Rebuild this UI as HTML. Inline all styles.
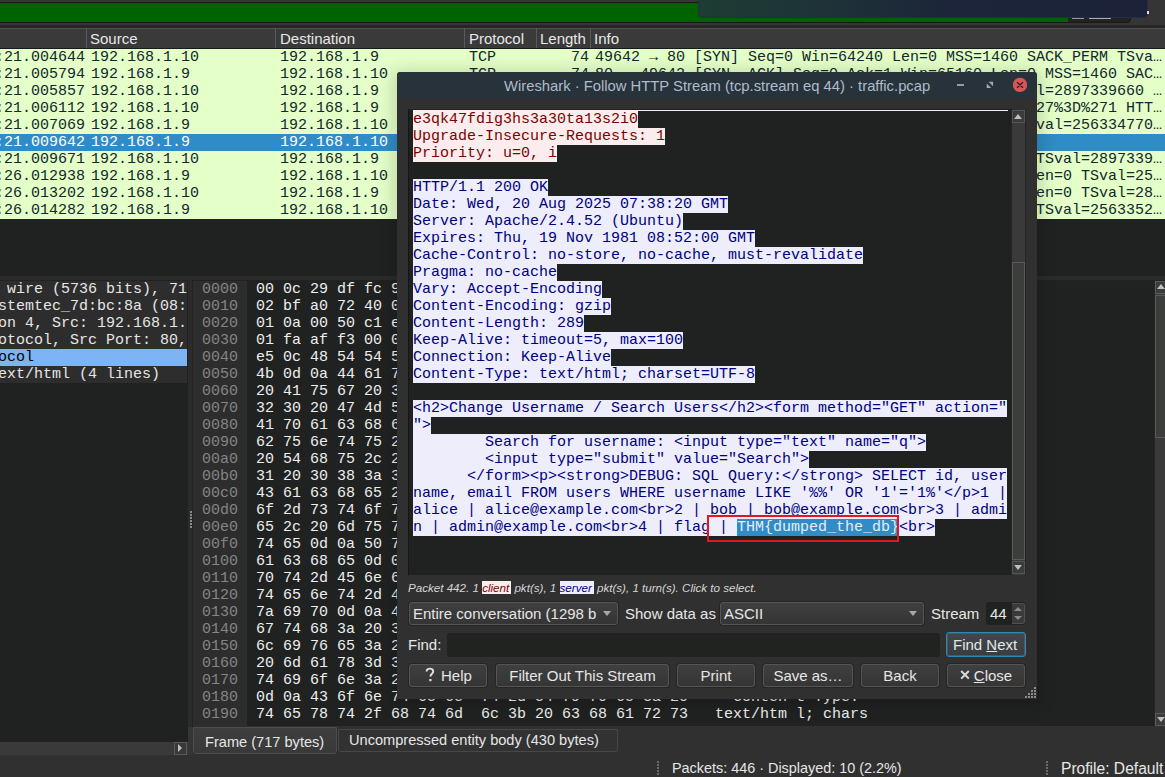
<!DOCTYPE html>
<html><head><meta charset="utf-8"><style>
*{margin:0;padding:0;box-sizing:border-box}
html,body{width:1165px;height:777px;overflow:hidden}
body{position:relative;background:#353535;font-family:"Liberation Sans",sans-serif;color:#e6e6e6}
.a{position:absolute}
.m{font-family:"Liberation Mono",monospace;font-size:15px;line-height:17px;white-space:pre}
.s{font-family:"Liberation Sans",sans-serif;font-size:15px;white-space:pre}
</style></head><body>

<div class="a" style="left:-4px;top:2px;width:1135px;height:21px;background:#212321;border:1px solid #181818;border-radius:0 0 4px 0"></div>
<div class="a" style="left:0;top:3px;width:1068px;height:19px;background:#006300"></div>
<div class="a" style="left:1072px;top:17px;width:12px;height:2px;background:#9a9a9a"></div>
<div class="a" style="left:1089px;top:17px;width:22px;height:2px;background:#b0b0b0"></div>
<div class="a" style="left:0;top:25px;width:1165px;height:3px;background:#262626"></div>
<div class="a" style="left:698px;top:-6px;width:450px;height:24px;border-radius:4px;border:1px solid #252c48;background:linear-gradient(90deg,#1d3d33 0%,#1e3138 30%,#1c2539 55%,#1c2339 100%)"></div>
<div class="a" style="left:1147px;top:11px;width:2px;height:3px;background:#ddd"></div>
<div class="a" style="left:0;top:28px;width:1165px;height:20px;background:#3a3a3a;border-top:1px solid #4f4f4f"></div>
<div class="a" style="left:86px;top:28px;width:1px;height:20px;background:#5a5a5a"></div>
<div class="a" style="left:275px;top:28px;width:1px;height:20px;background:#5a5a5a"></div>
<div class="a" style="left:464px;top:28px;width:1px;height:20px;background:#5a5a5a"></div>
<div class="a" style="left:536px;top:28px;width:1px;height:20px;background:#5a5a5a"></div>
<div class="a" style="left:590px;top:28px;width:1px;height:20px;background:#5a5a5a"></div>
<div class="a s" style="left:90px;top:30px;line-height:17px;color:#e8e8e8">Source</div>
<div class="a s" style="left:280px;top:30px;line-height:17px;color:#e8e8e8">Destination</div>
<div class="a s" style="left:469px;top:30px;line-height:17px;color:#e8e8e8">Protocol</div>
<div class="a s" style="left:540px;top:30px;line-height:17px;color:#e8e8e8">Length</div>
<div class="a s" style="left:594px;top:30px;line-height:17px;color:#e8e8e8">Info</div>
<div class="a" style="left:0;top:48px;width:1165px;height:228px;background:#1f2220;border-top:1px solid #1a1a1a"></div>
<div class="a" style="left:0;top:49px;width:1165px;height:17px;background:#e4ffc7"></div>
<div class="a m" style="left:-50px;top:49px;color:#12272e">07:38:21.004644</div>
<div class="a m" style="left:91px;top:49px;color:#12272e">192.168.1.10</div>
<div class="a m" style="left:280px;top:49px;color:#12272e">192.168.1.9</div>
<div class="a m" style="left:469px;top:49px;color:#12272e">TCP</div>
<div class="a m" style="left:571px;top:49px;color:#12272e">74</div>
<div class="a m" style="left:595px;top:49px;color:#12272e">49642 → 80 [SYN] Seq=0 Win=64240 Len=0 MSS=1460 SACK_PERM TSva…</div>
<div class="a" style="left:0;top:66px;width:1165px;height:17px;background:#e4ffc7"></div>
<div class="a m" style="left:-50px;top:66px;color:#12272e">07:38:21.005794</div>
<div class="a m" style="left:91px;top:66px;color:#12272e">192.168.1.9</div>
<div class="a m" style="left:280px;top:66px;color:#12272e">192.168.1.10</div>
<div class="a m" style="left:469px;top:66px;color:#12272e">TCP</div>
<div class="a m" style="left:571px;top:66px;color:#12272e">74</div>
<div class="a m" style="left:595px;top:66px;color:#12272e">80 → 49642 [SYN, ACK] Seq=0 Ack=1 Win=65160 Len=0 MSS=1460 SAC…</div>
<div class="a" style="left:0;top:83px;width:1165px;height:17px;background:#e4ffc7"></div>
<div class="a m" style="left:-50px;top:83px;color:#12272e">07:38:21.005857</div>
<div class="a m" style="left:91px;top:83px;color:#12272e">192.168.1.10</div>
<div class="a m" style="left:280px;top:83px;color:#12272e">192.168.1.9</div>
<div class="a m" style="left:469px;top:83px;color:#12272e">TCP</div>
<div class="a m" style="left:571px;top:83px;color:#12272e">66</div>
<div class="a m" style="left:595px;top:83px;color:#12272e">49642 → 80 [ACK] Seq=1 Ack=1 Win=64256 Len=0 TSval=2897339660 …</div>
<div class="a" style="left:0;top:100px;width:1165px;height:17px;background:#e4ffc7"></div>
<div class="a m" style="left:-50px;top:100px;color:#12272e">07:38:21.006112</div>
<div class="a m" style="left:91px;top:100px;color:#12272e">192.168.1.10</div>
<div class="a m" style="left:280px;top:100px;color:#12272e">192.168.1.9</div>
<div class="a m" style="left:469px;top:100px;color:#12272e">HTTP</div>
<div class="a m" style="left:562px;top:100px;color:#12272e">540</div>
<div class="a m" style="left:595px;top:100px;color:#12272e">GET /?q=%25%27+OR+%271%27%3D%271 HTTP/1.1  x%27+O27%3D%271 HTT…</div>
<div class="a" style="left:0;top:117px;width:1165px;height:17px;background:#e4ffc7"></div>
<div class="a m" style="left:-50px;top:117px;color:#12272e">07:38:21.007069</div>
<div class="a m" style="left:91px;top:117px;color:#12272e">192.168.1.9</div>
<div class="a m" style="left:280px;top:117px;color:#12272e">192.168.1.10</div>
<div class="a m" style="left:469px;top:117px;color:#12272e">TCP</div>
<div class="a m" style="left:571px;top:117px;color:#12272e">66</div>
<div class="a m" style="left:595px;top:117px;color:#12272e">80 → 49642 [ACK] Seq=1 Ack=475 Win=65024 Len=0 TSval=256334770…</div>
<div class="a" style="left:0;top:134px;width:1165px;height:17px;background:#308cc6"></div>
<div class="a m" style="left:-50px;top:134px;color:#ffffff">07:38:21.009642</div>
<div class="a m" style="left:91px;top:134px;color:#ffffff">192.168.1.9</div>
<div class="a m" style="left:280px;top:134px;color:#ffffff">192.168.1.10</div>
<div class="a m" style="left:469px;top:134px;color:#ffffff">HTTP</div>
<div class="a m" style="left:562px;top:134px;color:#ffffff">717</div>
<div class="a m" style="left:595px;top:134px;color:#ffffff">HTTP/1.1 200 OK  (text/html)</div>
<div class="a" style="left:0;top:151px;width:1165px;height:17px;background:#e4ffc7"></div>
<div class="a m" style="left:-50px;top:151px;color:#12272e">07:38:21.009671</div>
<div class="a m" style="left:91px;top:151px;color:#12272e">192.168.1.10</div>
<div class="a m" style="left:280px;top:151px;color:#12272e">192.168.1.9</div>
<div class="a m" style="left:469px;top:151px;color:#12272e">TCP</div>
<div class="a m" style="left:571px;top:151px;color:#12272e">66</div>
<div class="a m" style="left:595px;top:151px;color:#12272e">49642 → 80 [ACK] Seq=475 Ack=652 Win=64128 Len=0 TSval=2897339…</div>
<div class="a" style="left:0;top:168px;width:1165px;height:17px;background:#e4ffc7"></div>
<div class="a m" style="left:-50px;top:168px;color:#12272e">07:38:26.012938</div>
<div class="a m" style="left:91px;top:168px;color:#12272e">192.168.1.9</div>
<div class="a m" style="left:280px;top:168px;color:#12272e">192.168.1.10</div>
<div class="a m" style="left:469px;top:168px;color:#12272e">TCP</div>
<div class="a m" style="left:571px;top:168px;color:#12272e">66</div>
<div class="a m" style="left:595px;top:168px;color:#12272e">80 → 49642 [FIN, ACK] Seq=652 Ack=475 Win=65024 Len=0 TSval=25…</div>
<div class="a" style="left:0;top:185px;width:1165px;height:17px;background:#e4ffc7"></div>
<div class="a m" style="left:-50px;top:185px;color:#12272e">07:38:26.013202</div>
<div class="a m" style="left:91px;top:185px;color:#12272e">192.168.1.10</div>
<div class="a m" style="left:280px;top:185px;color:#12272e">192.168.1.9</div>
<div class="a m" style="left:469px;top:185px;color:#12272e">TCP</div>
<div class="a m" style="left:571px;top:185px;color:#12272e">66</div>
<div class="a m" style="left:595px;top:185px;color:#12272e">49642 → 80 [FIN, ACK] Seq=475 Ack=653 Win=64128 Len=0 TSval=28…</div>
<div class="a" style="left:0;top:202px;width:1165px;height:17px;background:#e4ffc7"></div>
<div class="a m" style="left:-50px;top:202px;color:#12272e">07:38:26.014282</div>
<div class="a m" style="left:91px;top:202px;color:#12272e">192.168.1.9</div>
<div class="a m" style="left:280px;top:202px;color:#12272e">192.168.1.10</div>
<div class="a m" style="left:469px;top:202px;color:#12272e">TCP</div>
<div class="a m" style="left:571px;top:202px;color:#12272e">66</div>
<div class="a m" style="left:595px;top:202px;color:#12272e">80 → 49642 [ACK] Seq=653 Ack=476 Win=65024 Len=0 TSval=2563352…</div>
<div class="a" style="left:0;top:276px;width:1165px;height:5px;background:#2b2b2b"></div>
<div class="a" style="left:0;top:280px;width:188px;height:475px;background:#1f2220;border-top:1px solid #222"></div>
<div class="a" style="left:0;top:281px;width:187px;height:17px;background:#2d2d2d"></div>
<div class="a m" style="left:-2px;top:281px;color:#e6e6e6"> wire (5736 bits), 71</div>
<div class="a" style="left:0;top:298px;width:187px;height:17px;background:#2d2d2d"></div>
<div class="a m" style="left:-2px;top:298px;color:#e6e6e6">stemtec_7d:bc:8a (08:</div>
<div class="a" style="left:0;top:315px;width:187px;height:17px;background:#2d2d2d"></div>
<div class="a m" style="left:-2px;top:315px;color:#e6e6e6">on 4, Src: 192.168.1.</div>
<div class="a" style="left:0;top:332px;width:187px;height:17px;background:#2d2d2d"></div>
<div class="a m" style="left:-2px;top:332px;color:#e6e6e6">otocol, Src Port: 80,</div>
<div class="a" style="left:0;top:349px;width:187px;height:17px;background:#7eb4f4"></div>
<div class="a m" style="left:-2px;top:349px;color:#000000">ocol</div>
<div class="a" style="left:0;top:366px;width:187px;height:17px;background:#2d2d2d"></div>
<div class="a m" style="left:-2px;top:366px;color:#e6e6e6">ext/html (4 lines)</div>
<div class="a" style="left:0;top:742px;width:188px;height:14px;background:#3a3a3a;border-bottom:1px solid #242424"></div>
<div class="a" style="left:174px;top:742px;width:13px;height:13px;background:#383a38;border:1px solid #5a5a5a"></div>
<div class="a" style="left:178px;top:744px;width:0;height:0;border-left:4px solid #c0c0c0;border-top:4px solid transparent;border-bottom:4px solid transparent"></div>
<div class="a" style="left:188px;top:281px;width:5px;height:446px;background:#2b2b2b"></div>
<div class="a" style="left:190px;top:511px;width:2px;height:2px;background:#8a8a8a"></div>
<div class="a" style="left:190px;top:514px;width:2px;height:2px;background:#8a8a8a"></div>
<div class="a" style="left:190px;top:517px;width:2px;height:2px;background:#8a8a8a"></div>
<div class="a" style="left:190px;top:520px;width:2px;height:2px;background:#8a8a8a"></div>
<div class="a" style="left:190px;top:523px;width:2px;height:2px;background:#8a8a8a"></div>
<div class="a" style="left:190px;top:526px;width:2px;height:2px;background:#8a8a8a"></div>
<div class="a" style="left:192px;top:280px;width:973px;height:447px;background:#1f2220;border-left:1px solid #222;border-top:1px solid #222"></div>
<div class="a" style="left:193px;top:281px;width:54px;height:445px;background:#2d2d2d"></div>
<div class="a m" style="left:202px;top:281px;color:#858585">0000</div>
<div class="a m" style="left:256px;top:281px;color:#eeeeee">00 0c 29 df fc 9a 08 00  27 bc 7d 8a 08 00 45 00   ··)····· &#x27;·}···E·</div>
<div class="a m" style="left:202px;top:298px;color:#858585">0010</div>
<div class="a m" style="left:256px;top:298px;color:#eeeeee">02 bf a0 72 40 00 40 06  15 3a c0 a8 01 09 c0 a8   ···r@·@· ·:······</div>
<div class="a m" style="left:202px;top:315px;color:#858585">0020</div>
<div class="a m" style="left:256px;top:315px;color:#eeeeee">01 0a 00 50 c1 e2 ac 9a  1e 62 b7 1c 4d 71 80 18   ···P···· ·b··Mq··</div>
<div class="a m" style="left:202px;top:332px;color:#858585">0030</div>
<div class="a m" style="left:256px;top:332px;color:#eeeeee">01 fa af f3 00 00 01 01  08 0a 98 c7 dd b2 ac b1   ········ ········</div>
<div class="a m" style="left:202px;top:349px;color:#858585">0040</div>
<div class="a m" style="left:256px;top:349px;color:#eeeeee">e5 0c 48 54 54 50 2f 31  2e 31 20 32 30 30 20 4f   ··HTTP/1 .1 200 O</div>
<div class="a m" style="left:202px;top:366px;color:#858585">0050</div>
<div class="a m" style="left:256px;top:366px;color:#eeeeee">4b 0d 0a 44 61 74 65 3a  20 57 65 64 2c 20 32 30   K··Date:  Wed, 20</div>
<div class="a m" style="left:202px;top:383px;color:#858585">0060</div>
<div class="a m" style="left:256px;top:383px;color:#eeeeee">20 41 75 67 20 32 30 32  35 20 30 37 3a 33 38 3a    Aug 202 5 07:38:</div>
<div class="a m" style="left:202px;top:400px;color:#858585">0070</div>
<div class="a m" style="left:256px;top:400px;color:#eeeeee">32 30 20 47 4d 54 0d 0a  53 65 72 76 65 72 3a 20   20 GMT·· Server: </div>
<div class="a m" style="left:202px;top:417px;color:#858585">0080</div>
<div class="a m" style="left:256px;top:417px;color:#eeeeee">41 70 61 63 68 65 2f 32  2e 34 2e 35 32 20 28 55   Apache/2 .4.52 (U</div>
<div class="a m" style="left:202px;top:434px;color:#858585">0090</div>
<div class="a m" style="left:256px;top:434px;color:#eeeeee">62 75 6e 74 75 29 0d 0a  45 78 70 69 72 65 73 3a   buntu)·· Expires:</div>
<div class="a m" style="left:202px;top:451px;color:#858585">00a0</div>
<div class="a m" style="left:256px;top:451px;color:#eeeeee">20 54 68 75 2c 20 31 39  20 4e 6f 76 20 31 39 38    Thu, 19  Nov 198</div>
<div class="a m" style="left:202px;top:468px;color:#858585">00b0</div>
<div class="a m" style="left:256px;top:468px;color:#eeeeee">31 20 30 38 3a 35 32 3a  30 30 20 47 4d 54 0d 0a   1 08:52: 00 GMT··</div>
<div class="a m" style="left:202px;top:485px;color:#858585">00c0</div>
<div class="a m" style="left:256px;top:485px;color:#eeeeee">43 61 63 68 65 2d 43 6f  6e 74 72 6f 6c 3a 20 6e   Cache-Co ntrol: n</div>
<div class="a m" style="left:202px;top:502px;color:#858585">00d0</div>
<div class="a m" style="left:256px;top:502px;color:#eeeeee">6f 2d 73 74 6f 72 65 2c  20 6e 6f 2d 63 61 63 68   o-store,  no-cach</div>
<div class="a m" style="left:202px;top:519px;color:#858585">00e0</div>
<div class="a m" style="left:256px;top:519px;color:#eeeeee">65 2c 20 6d 75 73 74 2d  72 65 76 61 6c 69 64 61   e, must- revalida</div>
<div class="a m" style="left:202px;top:536px;color:#858585">00f0</div>
<div class="a m" style="left:256px;top:536px;color:#eeeeee">74 65 0d 0a 50 72 61 67  6d 61 3a 20 6e 6f 2d 63   te··Prag ma: no-c</div>
<div class="a m" style="left:202px;top:553px;color:#858585">0100</div>
<div class="a m" style="left:256px;top:553px;color:#eeeeee">61 63 68 65 0d 0a 56 61  72 79 3a 20 41 63 63 65   ache··Va ry: Acce</div>
<div class="a m" style="left:202px;top:570px;color:#858585">0110</div>
<div class="a m" style="left:256px;top:570px;color:#eeeeee">70 74 2d 45 6e 63 6f 64  69 6e 67 0d 0a 43 6f 6e   pt-Encod ing··Con</div>
<div class="a m" style="left:202px;top:587px;color:#858585">0120</div>
<div class="a m" style="left:256px;top:587px;color:#eeeeee">74 65 6e 74 2d 45 6e 63  6f 64 69 6e 67 3a 20 67   tent-Enc oding: g</div>
<div class="a m" style="left:202px;top:604px;color:#858585">0130</div>
<div class="a m" style="left:256px;top:604px;color:#eeeeee">7a 69 70 0d 0a 43 6f 6e  74 65 6e 74 2d 4c 65 6e   zip··Con tent-Len</div>
<div class="a m" style="left:202px;top:621px;color:#858585">0140</div>
<div class="a m" style="left:256px;top:621px;color:#eeeeee">67 74 68 3a 20 32 38 39  0d 0a 4b 65 65 70 2d 41   gth: 289 ··Keep-A</div>
<div class="a m" style="left:202px;top:638px;color:#858585">0150</div>
<div class="a m" style="left:256px;top:638px;color:#eeeeee">6c 69 76 65 3a 20 74 69  6d 65 6f 75 74 3d 35 2c   live: ti meout=5,</div>
<div class="a m" style="left:202px;top:655px;color:#858585">0160</div>
<div class="a m" style="left:256px;top:655px;color:#eeeeee">20 6d 61 78 3d 31 30 30  0d 0a 43 6f 6e 6e 65 63    max=100 ··Connec</div>
<div class="a m" style="left:202px;top:672px;color:#858585">0170</div>
<div class="a m" style="left:256px;top:672px;color:#eeeeee">74 69 6f 6e 3a 20 4b 65  65 70 2d 41 6c 69 76 65   tion: Ke ep-Alive</div>
<div class="a m" style="left:202px;top:689px;color:#858585">0180</div>
<div class="a m" style="left:256px;top:689px;color:#eeeeee">0d 0a 43 6f 6e 74 65 6e  74 2d 54 79 70 65 3a 20   ··Conten t-Type: </div>
<div class="a m" style="left:202px;top:706px;color:#858585">0190</div>
<div class="a m" style="left:256px;top:706px;color:#eeeeee">74 65 78 74 2f 68 74 6d  6c 3b 20 63 68 61 72 73   text/htm l; chars</div>
<div class="a" style="left:1154px;top:281px;width:11px;height:445px;background:#3a3a3a;border-left:1px solid #262626"></div>
<div class="a" style="left:1155px;top:281px;width:12px;height:13px;background:#3a3c3a;border:1px solid #5a5a5a"></div>
<div class="a" style="left:1157px;top:284px;width:0;height:0;border-bottom:5px solid #c0c0c0;border-left:4px solid transparent;border-right:4px solid transparent"></div>
<div class="a" style="left:1155px;top:295px;width:12px;height:143px;background:#3c3e3c;border:1px solid #5a5a5a"></div>
<div class="a" style="left:1155px;top:713px;width:12px;height:13px;background:#3a3c3a;border:1px solid #5a5a5a"></div>
<div class="a" style="left:1157px;top:717px;width:0;height:0;border-top:5px solid #c0c0c0;border-left:4px solid transparent;border-right:4px solid transparent"></div>
<div class="a" style="left:193px;top:726px;width:972px;height:51px;background:#303030"></div>
<div class="a" style="left:0;top:755px;width:193px;height:22px;background:#303030"></div>
<div class="a" style="left:193px;top:727px;width:144px;height:27px;background:linear-gradient(#3e3e3e,#393939);border:1px solid #4c4c4c;border-radius:0 0 3px 3px"></div>
<div class="a s" style="left:205px;top:734px;font-size:14.6px;color:#e6e6e6">Frame (717 bytes)</div>
<div class="a" style="left:338px;top:729px;width:280px;height:23px;background:#323232;border:1px solid #474747;border-radius:0 0 3px 3px"></div>
<div class="a s" style="left:349px;top:732px;font-size:14.6px;color:#e6e6e6">Uncompressed entity body (430 bytes)</div>
<div class="a" style="left:657px;top:761px;width:2px;height:2px;background:#6a6a6a"></div>
<div class="a" style="left:657px;top:764px;width:2px;height:2px;background:#6a6a6a"></div>
<div class="a" style="left:657px;top:767px;width:2px;height:2px;background:#6a6a6a"></div>
<div class="a" style="left:657px;top:770px;width:2px;height:2px;background:#6a6a6a"></div>
<div class="a" style="left:657px;top:773px;width:2px;height:2px;background:#6a6a6a"></div>
<div class="a" style="left:1046px;top:761px;width:2px;height:2px;background:#6a6a6a"></div>
<div class="a" style="left:1046px;top:764px;width:2px;height:2px;background:#6a6a6a"></div>
<div class="a" style="left:1046px;top:767px;width:2px;height:2px;background:#6a6a6a"></div>
<div class="a" style="left:1046px;top:770px;width:2px;height:2px;background:#6a6a6a"></div>
<div class="a" style="left:1046px;top:773px;width:2px;height:2px;background:#6a6a6a"></div>
<div class="a s" style="left:672px;top:760px;font-size:14.4px;color:#e6e6e6">Packets: 446 · Displayed: 10 (2.2%)</div>
<div class="a s" style="left:1061px;top:760px;font-size:15.6px;color:#e6e6e6">Profile: Default</div>
<div class="a" style="left:397px;top:72px;width:640px;height:627px;background:#303030;border-radius:3px 3px 0 0;box-shadow:0 3px 16px 5px rgba(0,0,0,0.14)"></div>
<div class="a" style="left:397px;top:72px;width:640px;height:26px;background:#28323a;border-radius:4px 4px 0 0"></div>
<div class="a s" style="left:504px;top:78px;font-size:14.8px;color:#aebccb">Wireshark · Follow HTTP Stream (tcp.stream eq 44) · traffic.pcap</div>
<div class="a" style="left:957px;top:84px;width:7px;height:2px;background:#9a9aa3"></div>
<svg class="a" style="left:1010px;top:75px" width="20" height="20"><circle cx="10" cy="9.9" r="7.15" fill="#da5558"/><path d="M7.4 7.4 L12.6 12.4 M12.6 7.4 L7.4 12.4" stroke="#1e2526" stroke-width="1.35" stroke-linecap="round"/></svg>
<svg class="a" style="left:980px;top:76px" width="20" height="20"><path d="M8.6 5.8 H13.1 V10.3 Z M6.7 7.6 V12.1 H11.2 Z" fill="#a9a6b0"/></svg>
<div class="a" style="left:408px;top:109px;width:605px;height:466px;background:#1f2220;border-left:1px solid #151515;overflow:hidden"></div>
<div class="a" style="left:409px;top:110px;width:603px;height:465px;overflow:hidden">
<div class="a" style="left:4px;top:-16px;width:595px;height:17px;background:#fbeded"></div>
<div class="a m" style="left:4px;top:1px;color:#7f0000;background:#fbeded">e3qk47fdig3hs3a30ta13s2i0</div>
<div class="a m" style="left:4px;top:18px;color:#7f0000;background:#fbeded">Upgrade-Insecure-Requests: 1</div>
<div class="a m" style="left:4px;top:35px;color:#7f0000;background:#fbeded">Priority: u=0, i</div>
<div class="a m" style="left:4px;top:69px;color:#00007f;background:#ededfb">HTTP/1.1 200 OK</div>
<div class="a m" style="left:4px;top:86px;color:#00007f;background:#ededfb">Date: Wed, 20 Aug 2025 07:38:20 GMT</div>
<div class="a m" style="left:4px;top:103px;color:#00007f;background:#ededfb">Server: Apache/2.4.52 (Ubuntu)</div>
<div class="a m" style="left:4px;top:120px;color:#00007f;background:#ededfb">Expires: Thu, 19 Nov 1981 08:52:00 GMT</div>
<div class="a m" style="left:4px;top:137px;color:#00007f;background:#ededfb">Cache-Control: no-store, no-cache, must-revalidate</div>
<div class="a m" style="left:4px;top:154px;color:#00007f;background:#ededfb">Pragma: no-cache</div>
<div class="a m" style="left:4px;top:171px;color:#00007f;background:#ededfb">Vary: Accept-Encoding</div>
<div class="a m" style="left:4px;top:188px;color:#00007f;background:#ededfb">Content-Encoding: gzip</div>
<div class="a m" style="left:4px;top:205px;color:#00007f;background:#ededfb">Content-Length: 289</div>
<div class="a m" style="left:4px;top:222px;color:#00007f;background:#ededfb">Keep-Alive: timeout=5, max=100</div>
<div class="a m" style="left:4px;top:239px;color:#00007f;background:#ededfb">Connection: Keep-Alive</div>
<div class="a m" style="left:4px;top:256px;color:#00007f;background:#ededfb">Content-Type: text/html; charset=UTF-8</div>
<div class="a m" style="left:4px;top:290px;color:#00007f;background:#ededfb">&lt;h2&gt;Change Username / Search Users&lt;/h2&gt;&lt;form method=&quot;GET&quot; action=&quot;</div>
<div class="a m" style="left:4px;top:307px;color:#00007f;background:#ededfb">&quot;&gt;</div>
<div class="a m" style="left:4px;top:324px;color:#00007f;background:#ededfb">        Search for username: &lt;input type=&quot;text&quot; name=&quot;q&quot;&gt;</div>
<div class="a m" style="left:4px;top:341px;color:#00007f;background:#ededfb">        &lt;input type=&quot;submit&quot; value=&quot;Search&quot;&gt;</div>
<div class="a m" style="left:4px;top:358px;color:#00007f;background:#ededfb">      &lt;/form&gt;&lt;p&gt;&lt;strong&gt;DEBUG: SQL Query:&lt;/strong&gt; SELECT id, user</div>
<div class="a m" style="left:4px;top:375px;color:#00007f;background:#ededfb">name, email FROM users WHERE username LIKE &#x27;%%&#x27; OR &#x27;1&#x27;=&#x27;1%&#x27;&lt;/p&gt;1 |</div>
<div class="a m" style="left:4px;top:392px;color:#00007f;background:#ededfb">alice | alice@example.com&lt;br&gt;2 | bob | bob@example.com&lt;br&gt;3 | admi</div>
<div class="a m" style="left:4px;top:409px;color:#00007f;background:#ededfb">n | admin@example.com&lt;br&gt;4 | flag | </div>
<div class="a m" style="left:328px;top:409px;color:#e6eef5;background:#308cc6">THM{dumped_the_db}</div>
<div class="a m" style="left:490px;top:409px;color:#00007f;background:#ededfb">&lt;br&gt;</div>
</div>
<div class="a" style="left:707px;top:515px;width:192px;height:27px;border:2px solid #e3161e"></div>
<div class="a" style="left:1011px;top:110px;width:15px;height:465px;background:#3a3a3a;border-left:1px solid #262626;border-right:1px solid #262626"></div>
<div class="a" style="left:1012px;top:110px;width:13px;height:13px;background:#3a3c3a;border:1px solid #555"></div>
<div class="a" style="left:1014px;top:114px;width:0;height:0;border-bottom:5px solid #bdbdbd;border-left:4px solid transparent;border-right:4px solid transparent"></div>
<div class="a" style="left:1012px;top:262px;width:13px;height:298px;background:#3c3e3c;border:1px solid #5a5a5a"></div>
<div class="a" style="left:1012px;top:561px;width:13px;height:13px;background:#3a3c3a;border:1px solid #555"></div>
<div class="a" style="left:1014px;top:565px;width:0;height:0;border-top:5px solid #bdbdbd;border-left:4px solid transparent;border-right:4px solid transparent"></div>
<div class="a" style="left:408px;top:580px;font-family:'Liberation Sans',sans-serif;font-size:11.6px;font-style:italic;line-height:16px;white-space:pre;color:#d6d6d6">Packet 442. 1 <span style="background:#fbeded;color:#7f0000;padding-right:2px">client</span> pkt(s), 1 <span style="background:#ededfb;color:#00007f;padding-right:2px">server</span> pkt(s), 1 turn(s). Click to select.</div>
<div class="a" style="left:409px;top:602px;width:209px;height:23px;background:linear-gradient(#3f3f3f,#353535);border:1px solid #555;box-shadow:0 0 0 1px #262626;border-radius:3px"></div>
<div class="a s" style="left:413px;top:605px;color:#e6e6e6">Entire conversation (1298 b</div>
<div class="a" style="left:603px;top:611px;width:0;height:0;border-top:5px solid #a8a8a8;border-left:4px solid transparent;border-right:4px solid transparent"></div>
<div class="a s" style="left:625px;top:605px;color:#e6e6e6">Show data as</div>
<div class="a" style="left:720px;top:602px;width:204px;height:23px;background:linear-gradient(#3f3f3f,#353535);border:1px solid #555;box-shadow:0 0 0 1px #262626;border-radius:3px"></div>
<div class="a s" style="left:724px;top:605px;color:#e6e6e6">ASCII</div>
<div class="a" style="left:909px;top:611px;width:0;height:0;border-top:5px solid #a8a8a8;border-left:4px solid transparent;border-right:4px solid transparent"></div>
<div class="a s" style="left:931px;top:605px;color:#e6e6e6">Stream</div>
<div class="a" style="left:986px;top:602px;width:39px;height:23px;background:#202220;border-radius:3px"></div>
<div class="a" style="left:1012px;top:603px;width:13px;height:21px;background:#3a3a3a;border:1px solid #525252;border-left:none;border-radius:0 3px 3px 0"></div>
<div class="a s" style="left:990px;top:605px;color:#e6e6e6">44</div>
<div class="a" style="left:1014px;top:607px;width:0;height:0;border-bottom:4px solid #8a8a8a;border-left:4px solid transparent;border-right:4px solid transparent"></div>
<div class="a" style="left:1014px;top:616px;width:0;height:0;border-top:4px solid #8a8a8a;border-left:4px solid transparent;border-right:4px solid transparent"></div>
<div class="a s" style="left:408px;top:636px;color:#e6e6e6">Find:</div>
<div class="a" style="left:447px;top:633px;width:493px;height:24px;background:#202320;border-radius:3px"></div>
<div class="a" style="left:946px;top:632px;width:80px;height:25px;background:linear-gradient(#41474b,#373d41);border:1px solid #2f86b8;box-shadow:inset 0 0 0 1px #50565a;border-radius:3px"></div>
<div class="a s" style="left:953px;top:636px;color:#e6e6e6">Find <u>N</u>ext</div>
<div class="a" style="left:409px;top:664px;width:78px;height:23px;background:linear-gradient(#3f3f3f,#353535);border:1px solid #555;box-shadow:0 0 0 1px #262626;border-radius:3px"></div>
<div class="a s" style="left:409px;top:667px;width:78px;text-align:center;color:#e6e6e6"></div>
<div class="a s" style="left:441px;top:667px;color:#e6e6e6">Help</div>
<svg class="a" style="left:424px;top:667px" width="12" height="16"><path d="M2.6 4.6 C2.6 2.4 4.2 1.6 5.9 1.6 C7.8 1.6 9.2 2.7 9.2 4.5 C9.2 6.6 6.4 7.0 6.4 9.6" stroke="#e0e0e0" stroke-width="1.9" fill="none"/><rect x="5.3" y="12" width="2.2" height="2.2" fill="#e0e0e0"/></svg>
<div class="a" style="left:496px;top:664px;width:173px;height:23px;background:linear-gradient(#3f3f3f,#353535);border:1px solid #555;box-shadow:0 0 0 1px #262626;border-radius:3px"></div>
<div class="a s" style="left:496px;top:667px;width:173px;text-align:center;color:#e6e6e6">Filter Out This Stream</div>
<div class="a" style="left:677px;top:664px;width:78px;height:23px;background:linear-gradient(#3f3f3f,#353535);border:1px solid #555;box-shadow:0 0 0 1px #262626;border-radius:3px"></div>
<div class="a s" style="left:677px;top:667px;width:78px;text-align:center;color:#e6e6e6">Print</div>
<div class="a" style="left:763px;top:664px;width:90px;height:23px;background:linear-gradient(#3f3f3f,#353535);border:1px solid #555;box-shadow:0 0 0 1px #262626;border-radius:3px"></div>
<div class="a s" style="left:763px;top:667px;width:90px;text-align:center;color:#e6e6e6">Save as…</div>
<div class="a" style="left:861px;top:664px;width:78px;height:23px;background:linear-gradient(#3f3f3f,#353535);border:1px solid #555;box-shadow:0 0 0 1px #262626;border-radius:3px"></div>
<div class="a s" style="left:861px;top:667px;width:78px;text-align:center;color:#e6e6e6">Back</div>
<div class="a" style="left:947px;top:664px;width:78px;height:23px;background:linear-gradient(#3f3f3f,#353535);border:1px solid #555;box-shadow:0 0 0 1px #262626;border-radius:3px"></div>
<div class="a s" style="left:947px;top:667px;width:78px;text-align:center;color:#e6e6e6"><span style="display:inline-block;width:14px"></span><u>C</u>lose</div>
<svg class="a" style="left:958px;top:668px" width="14" height="14"><path d="M3.2 3 L10.8 10.6 M10.8 3 L3.2 10.6" stroke="#dcdcdc" stroke-width="2"/></svg>
<div class="a" style="left:1034px;top:687px;width:2px;height:2px;background:#8a8a8a"></div>
<div class="a" style="left:1031px;top:690px;width:2px;height:2px;background:#8a8a8a"></div>
<div class="a" style="left:1034px;top:690px;width:2px;height:2px;background:#8a8a8a"></div>
<div class="a" style="left:1028px;top:693px;width:2px;height:2px;background:#8a8a8a"></div>
<div class="a" style="left:1031px;top:693px;width:2px;height:2px;background:#8a8a8a"></div>
<div class="a" style="left:1034px;top:693px;width:2px;height:2px;background:#8a8a8a"></div>
<div class="a" style="left:1025px;top:696px;width:2px;height:2px;background:#8a8a8a"></div>
<div class="a" style="left:1028px;top:696px;width:2px;height:2px;background:#8a8a8a"></div>
<div class="a" style="left:1031px;top:696px;width:2px;height:2px;background:#8a8a8a"></div>
<div class="a" style="left:1034px;top:696px;width:2px;height:2px;background:#8a8a8a"></div>
</body></html>
